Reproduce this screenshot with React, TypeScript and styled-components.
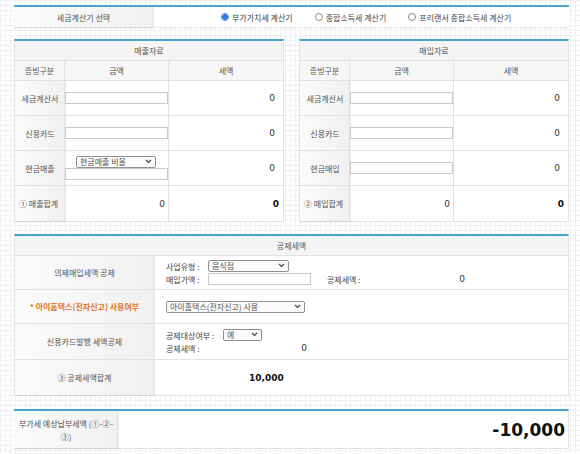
import styled, { createGlobalStyle } from 'styled-components'

const GlobalStyle = createGlobalStyle`
  html, body {
    margin: 0;
    padding: 0;
  }
  body {
    width: 580px;
    height: 454px;
    overflow: hidden;
    background-color: #ffffff;
    background-image:
      linear-gradient(#eff0f2 1px, transparent 1px),
      linear-gradient(90deg, #eff0f2 1px, transparent 1px);
    background-size: 5px 5px;
    font-family: 'Noto Sans CJK KR', 'Noto Sans', sans-serif;
    font-size: 8px;
    color: #555;
  }
`

const Chevron = () => (
  <svg width="7" height="5" viewBox="0 0 7 5">
    <path d="M1 1 L3.5 3.5 L6 1" fill="none" stroke="#444" strokeWidth="1.2" />
  </svg>
)

function Select({ value, width }: { value: string; width: number }) {
  return (
    <SelectWrap $w={width}>
      <SelectBox defaultValue={value}>
        <option>{value}</option>
      </SelectBox>
      <ChevronBox>
        <Chevron />
      </ChevronBox>
    </SelectWrap>
  )
}

function Radio({ checked, label }: { checked?: boolean; label: string }) {
  return (
    <RadioItem>
      <RadioDot $on={checked} />
      {label}
    </RadioItem>
  )
}

type Row = { label: string; kind: 'input' | 'select'; option?: string }

function DataPanel({ title, rows, total }: { title: string; rows: Row[]; total: string }) {
  return (
    <Panel>
      <PanelTitle>{title}</PanelTitle>
      <DataGrid>
        <HeadCell>증빙구분</HeadCell>
        <HeadCell>금액</HeadCell>
        <HeadCell $last>세액</HeadCell>
        {rows.map((r) => [
          <LabelCell key={r.label + '-l'}>{r.label}</LabelCell>,
          <InputCell key={r.label + '-i'}>
            {r.kind === 'select' && (
              <SelectRow>
                <Select value={r.option || ''} width={80} />
              </SelectRow>
            )}
            <TextInput $w={103} />
          </InputCell>,
          <NumCell key={r.label + '-n'} $last>0</NumCell>,
        ])}
        <LabelCell $left $bottom>{total}</LabelCell>
        <NumCell $bottom $tight>0</NumCell>
        <NumCell $bottom $last $bold>0</NumCell>
      </DataGrid>
    </Panel>
  )
}

export default function App() {
  return (
    <>
      <GlobalStyle />
      <Page>
        <TopBar>
          <SideLabel>세금계산기 선택</SideLabel>
          <RadioGroup>
            <Radio checked label="부가가치세 계산기" />
            <Radio label="종합소득세 계산기" />
            <Radio label="프리랜서 종합소득세 계산기" />
          </RadioGroup>
        </TopBar>

        <Panels>
          <DataPanel
            title="매출자료"
            total="① 매출합계"
            rows={[
              { label: '세금계산서', kind: 'input' },
              { label: '신용카드', kind: 'input' },
              { label: '현금매출', kind: 'select', option: '현금매출 비율' },
            ]}
          />
          <DataPanel
            title="매입자료"
            total="② 매입합계"
            rows={[
              { label: '세금계산서', kind: 'input' },
              { label: '신용카드', kind: 'input' },
              { label: '현금매입', kind: 'input' },
            ]}
          />
        </Panels>

        <Deduction>
          <PanelTitle>공제세액</PanelTitle>
          <DedGrid>
            <SideLabel $row>의제매입세액 공제</SideLabel>
            <DedCell>
              <Line>
                <FieldName $w={42}>사업유형 :</FieldName>
                <Select value="음식점" width={81} />
              </Line>
              <Line>
                <FieldName $w={42}>매입가액 :</FieldName>
                <TextInput $w={103} />
                <FieldName $w={40} $ml={16}>공제세액 :</FieldName>
                <Amount $w={98}>0</Amount>
              </Line>
            </DedCell>

            <SideLabel $row $accent>* 아이홈택스(전자신고) 사용여부</SideLabel>
            <DedCell>
              <Select value="아이홈택스(전자신고) 사용" width={139} />
            </DedCell>

            <SideLabel $row>신용카드발행 세액공제</SideLabel>
            <DedCell>
              <Line>
                <FieldName $w={57}>공제대상여부 :</FieldName>
                <Select value="예" width={39} />
              </Line>
              <Line>
                <FieldName $w={40}>공제세액 :</FieldName>
                <Amount $w={101}>0</Amount>
              </Line>
            </DedCell>

            <SideLabel $row $bottom>③ 공제세액합계</SideLabel>
            <DedCell $bottom>
              <SumValue>10,000</SumValue>
            </DedCell>
          </DedGrid>
        </Deduction>

        <ResultBar>
          <SideLabel $wrap>부가세 예상납부세액 (①-②-③)</SideLabel>
          <ResultValue>-10,000</ResultValue>
        </ResultBar>
      </Page>
    </>
  )
}

const Page = styled.div`
  width: 555px;
  padding: 5px 0 0 14px;
  display: flex;
  flex-direction: column;
`

const TopBar = styled.div`
  display: grid;
  grid-template-columns: 139px 1fr;
  height: 20px;
  border-top: 2px solid #4aa4c8;
  background: #fff;
  box-shadow: 0 1px 1px rgba(0, 0, 0, 0.08);
`

const SideLabel = styled.div<{ $row?: boolean; $accent?: boolean; $bottom?: boolean; $wrap?: boolean }>`
  display: flex;
  align-items: center;
  justify-content: center;
  text-align: center;
  font-size: 8px;
  line-height: 13px;
  padding: ${(p) => (p.$wrap ? '0 4px' : '0')};
  color: ${(p) => (p.$accent ? '#e5731f' : '#555')};
  font-weight: ${(p) => (p.$accent ? 700 : 400)};
  background: linear-gradient(to right, #fbfbfb, #f0f0f0);
  box-shadow: inset -1px 0 0 #e2e2e2, 1px 1px 1px rgba(0, 0, 0, 0.06);
  border-bottom: ${(p) => (p.$row && !p.$bottom ? '1px solid #e2e2e2' : 'none')};
`

const RadioGroup = styled.div`
  display: flex;
  align-items: center;
  padding-left: 68px;
  gap: 22px;
  font-size: 8px;
  color: #444;
`

const RadioItem = styled.label`
  display: flex;
  align-items: center;
  gap: 3px;
`

const RadioDot = styled.span<{ $on?: boolean }>`
  width: 8px;
  height: 8px;
  border-radius: 50%;
  box-sizing: border-box;
  border: 1px solid ${(p) => (p.$on ? '#3a7fd8' : '#8a8a8a')};
  background: ${(p) => (p.$on ? 'radial-gradient(circle, #2a76e0 0 2.5px, #fff 3px)' : '#fff')};
`

const Panels = styled.div`
  display: grid;
  grid-template-columns: 270px 270px;
  gap: 15px;
  margin-top: 12px;
`

const Panel = styled.div`
  background: #fff;
  border-top: 2px solid #4aa4c8;
  border-left: 1px solid #e2e2e2;
  border-right: 1px solid #e2e2e2;
  border-bottom: 1px solid #e2e2e2;
`

const PanelTitle = styled.div`
  height: 19px;
  display: flex;
  align-items: center;
  justify-content: center;
  font-size: 8px;
  background: #f4f4f4;
  border-bottom: 1px solid #e2e2e2;
`

const DataGrid = styled.div`
  display: grid;
  grid-template-columns: 50px 104px 1fr;
  grid-auto-rows: 35px;
  grid-template-rows: 20px;
`

const HeadCell = styled.div<{ $last?: boolean }>`
  display: flex;
  align-items: center;
  justify-content: center;
  font-size: 8px;
  background: #f6f6f6;
  border-bottom: 1px solid #e2e2e2;
  border-right: ${(p) => (p.$last ? 'none' : '1px solid #e2e2e2')};
`

const LabelCell = styled(SideLabel)<{ $left?: boolean }>`
  justify-content: ${(p) => (p.$left ? 'flex-start' : 'center')};
  padding-left: ${(p) => (p.$left ? '4px' : '0')};
  border-bottom: ${(p) => (p.$bottom ? 'none' : '1px solid #e2e2e2')};
`

const InputCell = styled.div`
  display: flex;
  flex-direction: column;
  justify-content: center;
  align-items: flex-start;
  border-right: 1px solid #e2e2e2;
  border-bottom: 1px solid #e2e2e2;
`

const SelectRow = styled.div`
  padding-left: 11px;
  margin-top: -1px;
`

const NumCell = styled.div<{ $last?: boolean; $bottom?: boolean; $bold?: boolean; $tight?: boolean }>`
  display: flex;
  align-items: center;
  justify-content: flex-end;
  padding-right: ${(p) => (p.$tight ? '3px' : p.$bold ? '4px' : '8px')};
  font-family: 'DejaVu Sans', sans-serif;
  font-size: 9px;
  font-weight: ${(p) => (p.$bold ? 700 : 400)};
  color: ${(p) => (p.$bold ? '#111' : '#333')};
  border-right: ${(p) => (p.$last ? 'none' : '1px solid #e2e2e2')};
  border-bottom: ${(p) => (p.$bottom ? 'none' : '1px solid #e2e2e2')};
`

const TextInput = styled.input<{ $w: number }>`
  display: block;
  box-sizing: border-box;
  width: ${(p) => p.$w}px;
  height: 12px;
  margin: 0;
  padding: 0 2px;
  border: 1px solid #c9c9c9;
  background: #fff;
  font-size: 8px;
  outline: none;
`

const SelectWrap = styled.div<{ $w: number }>`
  position: relative;
  width: ${(p) => p.$w}px;
  height: 12px;
`

const SelectBox = styled.select`
  display: block;
  appearance: none;
  box-sizing: border-box;
  width: 100%;
  height: 100%;
  margin: 0;
  padding: 0 10px 0 3px;
  border: 1px solid #8f8f8f;
  border-radius: 2px;
  background: #fbfbfb;
  font-family: 'Noto Sans CJK KR', sans-serif;
  font-size: 8px;
  line-height: 10px;
  color: #555;
  outline: none;
`

const ChevronBox = styled.span`
  position: absolute;
  right: 4px;
  top: 3px;
  display: flex;
  pointer-events: none;
`

const Deduction = styled(Panel)`
  margin-top: 12px;
`

const DedGrid = styled.div`
  display: grid;
  grid-template-columns: 139px 1fr;
  grid-template-rows: 34px 34px 36px 35px;
`

const DedCell = styled.div<{ $bottom?: boolean }>`
  display: flex;
  flex-direction: column;
  justify-content: center;
  gap: 1px;
  padding-left: 12px;
  font-size: 8px;
  color: #444;
  border-bottom: ${(p) => (p.$bottom ? 'none' : '1px solid #e2e2e2')};
`

const Line = styled.div`
  display: flex;
  align-items: center;
  height: 12px;
`

const FieldName = styled.span<{ $w: number; $ml?: number }>`
  width: ${(p) => p.$w}px;
  margin-left: ${(p) => p.$ml || 0}px;
  white-space: nowrap;
`

const Amount = styled.span<{ $w: number }>`
  width: ${(p) => p.$w}px;
  text-align: right;
  font-family: 'DejaVu Sans', sans-serif;
  font-size: 9px;
  color: #333;
`

const SumValue = styled.span`
  padding-left: 83px;
  font-family: 'DejaVu Sans', sans-serif;
  font-size: 9px;
  font-weight: 700;
  color: #111;
`

const ResultBar = styled.div`
  display: grid;
  grid-template-columns: 104px 1fr;
  height: 37px;
  margin-top: 13px;
  background: #fff;
  border-top: 2px solid #4aa4c8;
  border-bottom: 1px solid #e2e2e2;
  border-right: 1px solid #e2e2e2;
`

const ResultValue = styled.div`
  display: flex;
  align-items: center;
  justify-content: flex-end;
  padding-right: 3px;
  font-family: 'DejaVu Sans', sans-serif;
  font-size: 17px;
  font-weight: 700;
  color: #111;
`
